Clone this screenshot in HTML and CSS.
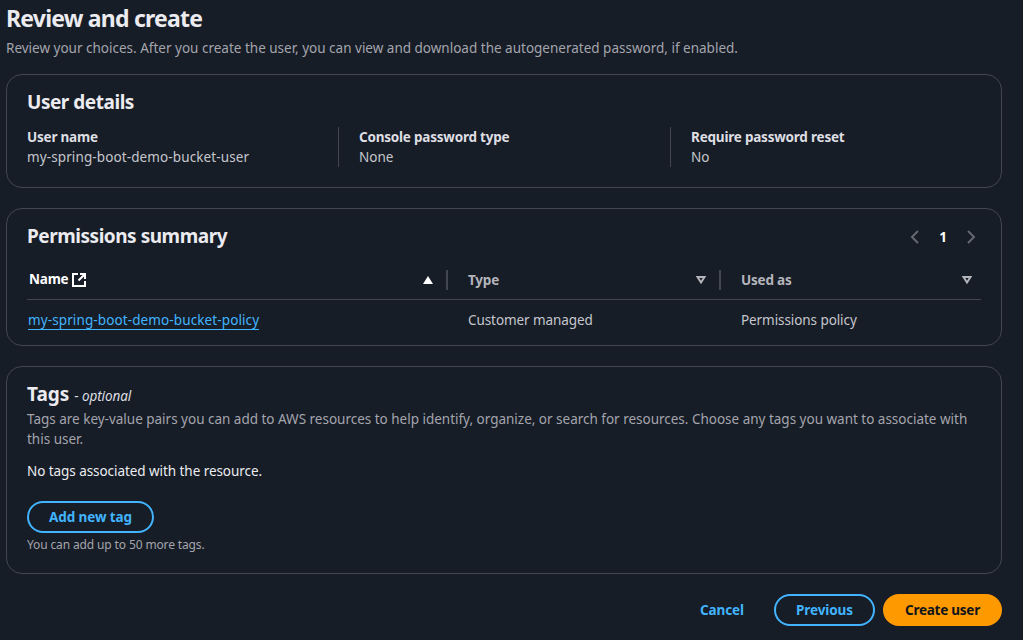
FILE: index.html
```html
<!DOCTYPE html>
<html lang="en">
<head>
<meta charset="utf-8">
<title>Review and create</title>
<link rel="stylesheet" href="styles.css">
</head>
<body>
<main class="page">
  <header class="page-header">
    <h1 class="page-title">Review and create</h1>
    <p class="page-desc">Review your choices. After you create the user, you can view and download the autogenerated password, if enabled.</p>
  </header>

  <section class="card card-details">
    <h2 class="card-title">User details</h2>
    <dl class="details">
      <div class="detail"><dt>User name</dt><dd class="identifier">my-spring-boot-demo-bucket-user</dd></div>
      <div class="detail"><dt>Console password type</dt><dd>None</dd></div>
      <div class="detail"><dt>Require password reset</dt><dd>No</dd></div>
    </dl>
  </section>

  <section class="card card-permissions">
    <div class="card-head">
      <h2 class="card-title">Permissions summary</h2>
      <nav class="pager">
        <svg class="icon" viewBox="0 0 16 16"><path d="M11 2 5 8l6 6"/></svg>
        <span class="pager-num">1</span>
        <svg class="icon" viewBox="0 0 16 16"><path d="M5 2l6 6-6 6"/></svg>
      </nav>
    </div>
    <div class="table">
      <div class="row row-head">
        <div class="cell cell-name sorted"><span class="label">Name</span><svg class="external" viewBox="0 0 16 16"><path d="M7 2H2v12h12V9M9 2h5v5M7.500 8.500l6-6"/></svg><svg class="sort" viewBox="0 0 12 10"><path class="solid" d="M6 1 11 9H1z"/></svg></div>
        <div class="cell cell-type"><span>Type</span><svg class="sort" viewBox="0 0 12 10"><path d="M2.500 2h7L6 7.500z"/></svg></div>
        <div class="cell cell-used"><span>Used as</span><svg class="sort" viewBox="0 0 12 10"><path d="M2.500 2h7L6 7.500z"/></svg></div>
      </div>
      <div class="row row-body">
        <div class="cell cell-name"><a class="link identifier">my-spring-boot-demo-bucket-policy</a></div>
        <div class="cell cell-type"><span>Customer managed</span></div>
        <div class="cell cell-used"><span>Permissions policy</span></div>
      </div>
    </div>
  </section>

  <section class="card card-tags">
    <h2 class="card-title title-tags">Tags <span class="optional">- <i>optional</i></span></h2>
    <p class="tags-desc">Tags are key-value pairs you can add to AWS resources to help identify, organize, or search for resources. Choose any tags you want to associate with<br>this user.</p>
    <p class="tags-empty">No tags associated with the resource.</p>
    <button class="btn btn-add">Add new tag</button>
    <p class="tags-hint">You can add up to 50 more tags.</p>
  </section>

  <footer class="actions">
    <button class="btn btn-link">Cancel</button>
    <button class="btn btn-prev">Previous</button>
    <button class="btn btn-primary">Create user</button>
  </footer>
</main>
</body>
</html>
```
FILE: styles.css
```css
* { box-sizing: border-box; margin: 0; padding: 0; }

body {
  background: #161d26;
  color: #c6c6cd;
  font: 13.5px/20px "Noto Sans", "Open Sans", sans-serif;
  height: 640px;
  overflow: hidden;
}

.page { width: 1002px; padding: 3px 0 0 6px; white-space: nowrap; }
.page-title { color: #ebebf0; font-size: 23px; line-height: 30px; font-weight: 700; letter-spacing: -0.78px; }
.page-desc { color: #a4a4ad; margin-top: 5px; }

.card { border: 1px solid #424650; border-radius: 16px; padding: 15px 20px 0; }
.card-title { color: #ebebf0; font-size: 19px; line-height: 24px; font-weight: 700; letter-spacing: -0.47px; }
.card-details { margin-top: 16px; height: 114px; }
.card-permissions { margin-top: 20px; height: 138px; }
.card-tags { margin-top: 20px; height: 208px; }

.details { display: flex; margin-top: 13px; }
.detail { flex: 0 0 332px; height: 40px; }
.detail:first-child { flex-basis: 311px; }
.detail + .detail { border-left: 1px solid #424650; padding-left: 20px; }
.detail:last-child { flex: 1; }
dt { color: #dedee3; font-weight: 700; letter-spacing: -0.21px; }
.identifier { letter-spacing: 0.11px; }

.card-head { display: flex; justify-content: space-between; }
.pager { display: flex; align-items: center; gap: 15px; padding: 2px 2px 0 0; }
.pager-num { color: #fff; font-weight: 700; width: 10px; text-align: center; }
.icon { width: 16px; height: 16px; fill: none; stroke: #656871; stroke-width: 2; }

.table { margin-top: 12px; }
.row { display: flex; height: 40px; align-items: center; }
.row-head { border-bottom: 1px solid #424650; color: #b4b4bb; font-weight: 700; letter-spacing: -0.2px; }
.row-body { letter-spacing: -0.08px; }
.cell { display: flex; align-items: center; }
.cell-name { width: 421px; padding-left: 1px; }
.cell-type { width: 273px; padding-left: 20px; }
.cell-used { flex: 1; padding-left: 20px; }
.row-head .cell { height: 20px; padding-right: 8px; }
.row-head .cell-name, .row-head .cell-type { border-right: 2px solid #424650; padding-right: 12px; }
.row-head .cell-name { padding-left: 2px; }
.sorted { color: #fff; }
.label { width: 38px; margin-top: -2px; }
.external { width: 16px; height: 16px; margin-left: 4px; fill: none; stroke: #fff; stroke-width: 2; }
.sort { width: 12px; height: 10px; margin-left: auto; fill: none; stroke: #b4b4bb; stroke-width: 2; }
.solid { fill: #fff; stroke: none; }
.link { color: #42b4ff; border-bottom: 1px solid #42b4ff; line-height: 18px; }

.title-tags { letter-spacing: 0; }
.optional { color: #dedee3; font-size: 13.5px; font-weight: 400; letter-spacing: -0.1px; }
.tags-desc { color: #a4a4ad; margin-top: 1px; letter-spacing: -0.01px; }
.tags-empty { color: #ebebf0; margin-top: 12px; letter-spacing: -0.06px; }
.tags-hint { color: #a4a4ad; margin-top: 4px; font-size: 12px; line-height: 16px; letter-spacing: -0.13px; }

.btn { height: 32px; border: 2px solid #42b4ff; border-radius: 16px; background: none; color: #42b4ff; font: 700 13.5px/20px "Noto Sans", sans-serif; letter-spacing: -0.1px; }
.btn-add { display: block; width: 127px; margin-top: 20px; }
.actions { display: flex; justify-content: flex-end; margin-top: 20px; }
.btn-link { width: 88px; border-color: transparent; }
.btn-prev { width: 101px; margin-left: 8px; }
.btn-primary { width: 119px; margin-left: 8px; background: #ff9900; border-color: #ff9900; color: #0f141a; letter-spacing: -0.25px; }
```
